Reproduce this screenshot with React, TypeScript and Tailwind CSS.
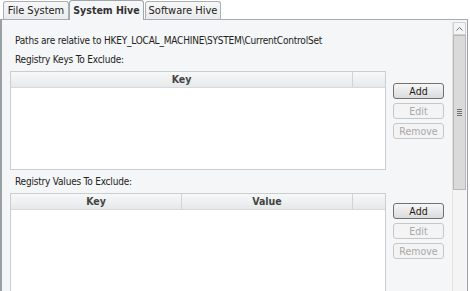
import React from "react";

const font = { fontFamily: '"DejaVu Sans Condensed", Lato, sans-serif' };

function Btn({ label, enabled }: { label: string; enabled?: boolean }) {
  return enabled ? (
    <div className="h-[16px] w-[51px] rounded-[3px] border border-[#707070] bg-gradient-to-b from-[#f6f6f6] to-[#dcdcdc] text-[10.5px] leading-[14px] text-[#1a1a1a] text-center">
      {label}
    </div>
  ) : (
    <div className="h-[16px] w-[51px] rounded-[3px] border border-[#c4c8cb] bg-[#f4f4f4] text-[10.5px] leading-[14px] text-[#a8a8a8] text-center">
      {label}
    </div>
  );
}

export default function App() {
  return (
    <div className="w-[470px] h-[291px] bg-white overflow-hidden text-[#222]" style={font}>
      <div className="flex h-[19px] pl-[3px] items-end">
        <div className="h-[18px] w-[66px] border border-b-0 border-[#a9b0b5] rounded-t-[3px] bg-gradient-to-b from-[#f7f7f7] to-[#e9ebec] text-[11px] leading-[17px] text-center whitespace-nowrap">
          File System
        </div>
        <div className="relative z-10 w-[75px] -mb-[1px] h-[20px] border border-b-0 border-[#a0a7ac] rounded-t-[3px] bg-[#f4f6f7] text-[10.5px] font-bold leading-[19px] text-center text-[#333] whitespace-nowrap">
          System Hive
        </div>
        <div className="h-[18px] w-[76px] ml-[1px] border border-b-0 border-[#a9b0b5] rounded-t-[3px] bg-gradient-to-b from-[#f7f7f7] to-[#e9ebec] text-[11px] leading-[17px] text-center whitespace-nowrap">
          Software Hive
        </div>
      </div>
      <div className="flex w-[468px] h-[280px] border-[2px] border-r border-b-0 border-l-[#9aa1a6] border-t-[#a5acb1] border-r-[#9aa1a6] border-t bg-[#f4f6f7]">
        <div className="flex-1 flex flex-col pl-[8px] pr-[8px]">
          <div className="mt-[13px] h-[16px] text-[10px] tracking-[-0.2px] leading-[16px] whitespace-nowrap pl-[5px]">
            Paths are relative to HKEY_LOCAL_MACHINE\SYSTEM\CurrentControlSet
          </div>
          <div className="mt-[3px] h-[16px] text-[10px] tracking-[-0.2px] leading-[16px] whitespace-nowrap pl-[5px]">
            Registry Keys To Exclude:
          </div>
          <div className="mt-[3px] flex">
            <div className="w-[376px] h-[99px] border border-[#c9ced2] bg-white flex flex-col">
              <div className="flex h-[16px] bg-gradient-to-b from-[#f7f8f8] to-[#e6e9eb] border-b border-[#d5d9dc]">
                <div className="w-[342px] border-r border-[#d0d4d7] text-[10.5px] font-bold leading-[15px] text-center text-[#444]">
                  Key
                </div>
                <div className="flex-1" />
              </div>
            </div>
            <div className="ml-[7px] mt-[12px] flex flex-col gap-[4px]">
              <Btn label="Add" enabled />
              <Btn label="Edit" />
              <Btn label="Remove" />
            </div>
          </div>
          <div className="mt-[4px] h-[16px] text-[10px] tracking-[-0.2px] leading-[16px] whitespace-nowrap pl-[5px]">
            Registry Values To Exclude:
          </div>
          <div className="mt-[3px] flex">
            <div className="w-[376px] h-[110px] border border-b-0 border-[#c9ced2] bg-white flex flex-col">
              <div className="flex h-[16px] bg-gradient-to-b from-[#f7f8f8] to-[#e6e9eb] border-b border-[#d5d9dc]">
                <div className="w-[171px] border-r border-[#d0d4d7] text-[10.5px] font-bold leading-[15px] text-center text-[#444]">
                  Key
                </div>
                <div className="w-[171px] border-r border-[#d0d4d7] text-[10.5px] font-bold leading-[15px] text-center text-[#444]">
                  Value
                </div>
                <div className="flex-1" />
              </div>
            </div>
            <div className="ml-[7px] mt-[10px] flex flex-col gap-[4px]">
              <Btn label="Add" enabled />
              <Btn label="Edit" />
              <Btn label="Remove" />
            </div>
          </div>
        </div>
        <div className="w-[14px] mt-[2px] mr-[1px] flex flex-col bg-[#f0f0f0] border-l border-[#e2e2e2]">
          <div className="h-[13px] flex items-center justify-center bg-[#f4f4f4] border border-[#d0d0d0]">
            <svg width="7" height="4" viewBox="0 0 7 4">
              <path d="M0.5 3.5 L3.5 0.5 L6.5 3.5" stroke="#707070" strokeWidth="1" fill="none" />
            </svg>
          </div>
          <div className="h-[155px] bg-[#dadada] border border-[#b8b8b8] flex flex-col items-center pt-[73px]">
            <div className="w-[5px] h-[1px] bg-[#707070]" />
            <div className="w-[5px] h-[1px] bg-[#707070] mt-[1px]" />
            <div className="w-[5px] h-[1px] bg-[#707070] mt-[1px]" />
            <div className="w-[5px] h-[1px] bg-[#707070] mt-[1px]" />
          </div>
          <div className="flex-1 bg-[#f4f4f4]" />
        </div>
      </div>
    </div>
  );
}
